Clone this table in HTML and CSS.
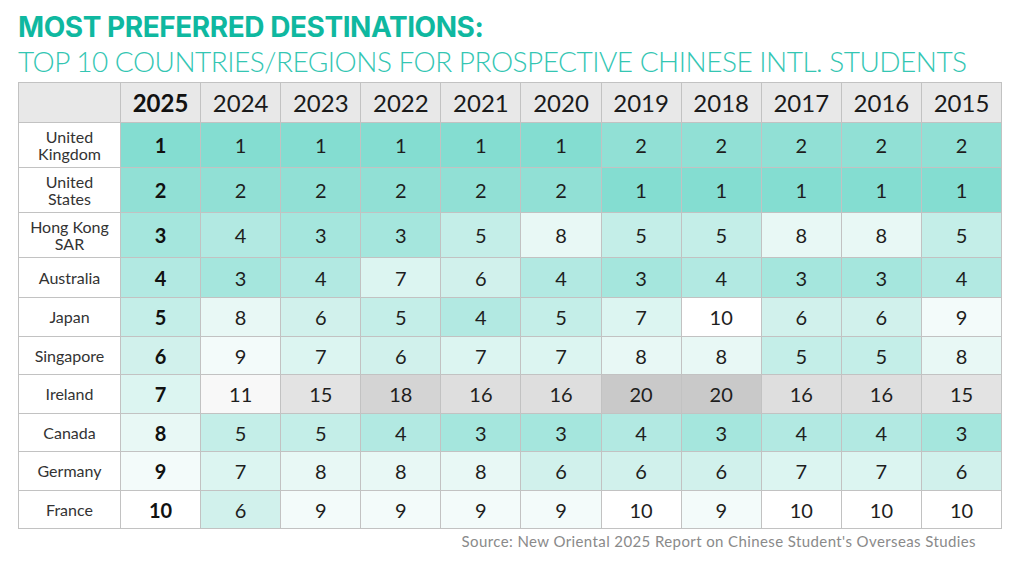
FILE: index.html
```html
<!DOCTYPE html>
<html>
<head>
<meta charset="utf-8">
<link rel="stylesheet" href="styles.css">
</head>
<body>
<div class="page">
  <h1 class="title">MOST PREFERRED DESTINATIONS:</h1>
  <h2 class="subtitle">TOP 10 COUNTRIES/REGIONS FOR PROSPECTIVE CHINESE INTL. STUDENTS</h2>
  <table class="rank">
    <colgroup>
      <col class="c-name"><col><col><col><col><col><col><col><col><col><col><col>
    </colgroup>
    <thead>
      <tr class="r-head">
        <th></th><th class="y-cur">2025</th><th>2024</th><th>2023</th><th>2022</th><th>2021</th><th>2020</th><th>2019</th><th>2018</th><th>2017</th><th>2016</th><th>2015</th>
      </tr>
    </thead>
    <tbody>
      <tr class="r-tall"><td class="name">United<br>Kingdom</td><td class="cur v1">1</td><td class="v1">1</td><td class="v1">1</td><td class="v1">1</td><td class="v1">1</td><td class="v1">1</td><td class="v2">2</td><td class="v2">2</td><td class="v2">2</td><td class="v2">2</td><td class="v2">2</td></tr>
      <tr class="r-tall"><td class="name">United<br>States</td><td class="cur v2">2</td><td class="v2">2</td><td class="v2">2</td><td class="v2">2</td><td class="v2">2</td><td class="v2">2</td><td class="v1">1</td><td class="v1">1</td><td class="v1">1</td><td class="v1">1</td><td class="v1">1</td></tr>
      <tr class="r-tall"><td class="name">Hong Kong<br>SAR</td><td class="cur v3">3</td><td class="v4">4</td><td class="v3">3</td><td class="v3">3</td><td class="v5">5</td><td class="v8">8</td><td class="v5">5</td><td class="v5">5</td><td class="v8">8</td><td class="v8">8</td><td class="v5">5</td></tr>
      <tr class="r-40"><td class="name">Australia</td><td class="cur v4">4</td><td class="v3">3</td><td class="v4">4</td><td class="v7">7</td><td class="v6">6</td><td class="v4">4</td><td class="v3">3</td><td class="v4">4</td><td class="v3">3</td><td class="v3">3</td><td class="v4">4</td></tr>
      <tr class="r-39"><td class="name">Japan</td><td class="cur v5">5</td><td class="v8">8</td><td class="v6">6</td><td class="v5">5</td><td class="v4">4</td><td class="v5">5</td><td class="v7">7</td><td class="v10">10</td><td class="v6">6</td><td class="v6">6</td><td class="v9">9</td></tr>
      <tr class="r-38"><td class="name">Singapore</td><td class="cur v6">6</td><td class="v9">9</td><td class="v7">7</td><td class="v6">6</td><td class="v7">7</td><td class="v7">7</td><td class="v8">8</td><td class="v8">8</td><td class="v5">5</td><td class="v5">5</td><td class="v8">8</td></tr>
      <tr class="r-39"><td class="name">Ireland</td><td class="cur v7">7</td><td class="v11">11</td><td class="v15">15</td><td class="v18">18</td><td class="v16">16</td><td class="v16">16</td><td class="v20">20</td><td class="v20">20</td><td class="v16">16</td><td class="v16">16</td><td class="v15">15</td></tr>
      <tr class="r-38"><td class="name">Canada</td><td class="cur v8">8</td><td class="v5">5</td><td class="v5">5</td><td class="v4">4</td><td class="v3">3</td><td class="v3">3</td><td class="v4">4</td><td class="v3">3</td><td class="v4">4</td><td class="v4">4</td><td class="v3">3</td></tr>
      <tr class="r-39"><td class="name">Germany</td><td class="cur v9">9</td><td class="v7">7</td><td class="v8">8</td><td class="v8">8</td><td class="v8">8</td><td class="v6">6</td><td class="v6">6</td><td class="v6">6</td><td class="v7">7</td><td class="v7">7</td><td class="v6">6</td></tr>
      <tr class="r-38"><td class="name">France</td><td class="cur v10">10</td><td class="v6">6</td><td class="v9">9</td><td class="v9">9</td><td class="v9">9</td><td class="v9">9</td><td class="v10">10</td><td class="v9">9</td><td class="v10">10</td><td class="v10">10</td><td class="v10">10</td></tr>
    </tbody>
  </table>
  <p class="source">Source: New Oriental 2025 Report on Chinese Student's Overseas Studies</p>
</div>
</body>
</html>
```

FILE: styles.css
```css
html, body {
  margin: 0;
  padding: 0;
  background: #ffffff;
}

.page {
  padding: 12.5px 0 0 18px;
  width: 983px;
}

.title {
  margin: 0;
  font-family: "Inter", "Lato", sans-serif;
  font-weight: 700;
  font-size: 28px;
  line-height: 28px;
  letter-spacing: -0.45px;
  color: #0fb8a0;
}

.subtitle {
  margin: 5.5px 0 0 0;
  font-family: "Lato", sans-serif;
  font-weight: 300;
  font-size: 28px;
  line-height: 30px;
  letter-spacing: -0.5px;
  color: #34c6b3;
  white-space: nowrap;
}

.rank {
  margin-top: 6px;
  width: 983px;
  table-layout: fixed;
  border-collapse: collapse;
  font-family: "Lato", sans-serif;
  color: #1e1e1e;
}

.rank col { width: 80.1px; }
.rank col.c-name { width: 102px; }

.rank th, .rank td {
  border: 1.5px solid #c2c2c2;
  padding: 0;
  text-align: center;
  vertical-align: middle;
}

.r-head th {
  height: 39px;
  background: #e8e8e8;
  font-weight: 400;
  font-size: 24px;
  color: #1a1a1a;
}

.r-head th.y-cur { font-weight: 700; color: #111; }

.rank td {
  font-size: 20px;
}

.rank td.name {
  background: #ffffff;
  font-size: 16px;
  line-height: 17.5px;
  color: #333333;
}

.rank td.cur { font-weight: 700; color: #111; }

.r-tall td { height: 44px; }
.r-40 td { height: 39px; }
.r-39 td { height: 38px; }
.r-38 td { height: 37px; }

.v1 { background: #84ddd1; }
.v2 { background: #91e0d5; }
.v3 { background: #a5e6dd; }
.v4 { background: #b2e9e2; }
.v5 { background: #c4eee8; }
.v6 { background: #d1f1ec; }
.v7 { background: #dcf5f1; }
.v8 { background: #e8f8f5; }
.v9 { background: #f3fbfa; }
.v10 { background: #ffffff; }
.v11 { background: #f8f8f8; }
.v15 { background: #e3e3e3; }
.v16 { background: #dedede; }
.v18 { background: #d4d4d4; }
.v20 { background: #c9c9c9; }

.source {
  margin: 3px 0 0 0;
  padding-right: 25px;
  text-align: right;
  font-family: "Lato", sans-serif;
  font-size: 15px;
  line-height: 18px;
  letter-spacing: 0.4px;
  color: #8a8a8a;
}
```
